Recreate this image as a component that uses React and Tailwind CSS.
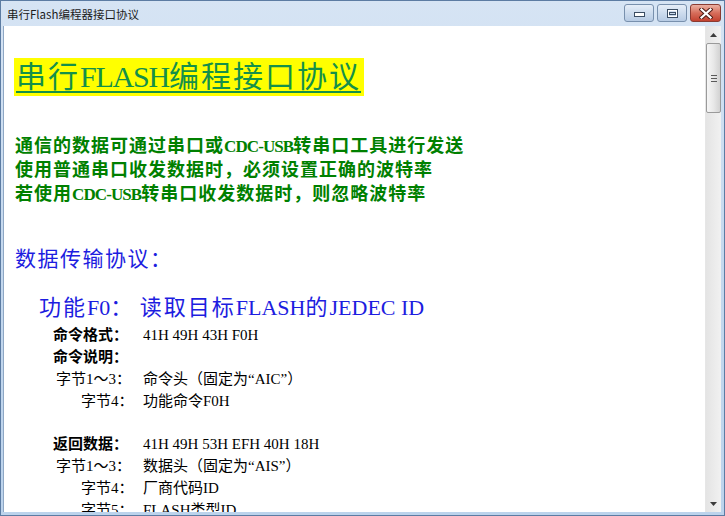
import React from "react";

function L({ children, className = "", tr = "tracking-normal" }) {
  return <span className={tr + " leading-none " + className}>{children}</span>;
}

function Row({ label, value, bold, indent }) {
  return (
    <div className="flex h-[21.875px]">
      <div className={"w-[90px] shrink-0 whitespace-nowrap " + indent + (bold ? " font-bold" : "")}>{label}</div>
      <div className="whitespace-nowrap">{value}</div>
    </div>
  );
}

export default function App() {
  return (
    <div className="w-[725px] h-[516px] flex flex-col border border-[#5c7ca3] bg-gradient-to-b from-[#d6e4f4] via-[#c4d8ee] to-[#bcd3ec] overflow-hidden">
      {/* title bar */}
      <div className="h-[25px] shrink-0 flex items-start justify-between pl-[6px] pr-[3px] pt-[3px]">
        <div className="mt-[2px] text-[11.5px] leading-[16px] text-[#1b1b1b] font-['Noto_Sans_CJK_SC',sans-serif]">
          串行Flash编程器接口协议
        </div>
        <div className="flex gap-[3px]">
          <div className="w-[30px] h-[18px] rounded-[3px] border border-[#7890ad] bg-gradient-to-b from-[#e6eef8] via-[#cddcee] to-[#b7cbe4] flex items-center justify-center">
            <svg width="11" height="5" viewBox="0 0 11 5" className="mt-[3px]">
              <rect x="0.5" y="0.5" width="10" height="4" fill="#ffffff" stroke="#3b4d63" />
            </svg>
          </div>
          <div className="w-[30px] h-[18px] rounded-[3px] border border-[#7890ad] bg-gradient-to-b from-[#e6eef8] via-[#cddcee] to-[#b7cbe4] flex items-center justify-center">
            <svg width="11" height="9" viewBox="0 0 11 9">
              <rect x="0.5" y="0.5" width="10" height="8" fill="none" stroke="#3b4d63" />
              <rect x="1.5" y="1.5" width="8" height="6" fill="none" stroke="#ffffff" />
              <rect x="2.5" y="3.5" width="6" height="2" fill="none" stroke="#3b4d63" />
            </svg>
          </div>
          <div className="w-[31px] h-[18px] rounded-[3px] border border-[#8a3b32] bg-gradient-to-b from-[#eab0a2] via-[#d66d5b] to-[#c3412f] flex items-center justify-center">
            <svg width="14" height="11" viewBox="0 0 14 11">
              <path d="M2.5 1.5 L11.5 9.5 M11.5 1.5 L2.5 9.5" stroke="#4e1c15" strokeWidth="4.2" strokeLinecap="square" />
              <path d="M2.5 1.5 L11.5 9.5 M11.5 1.5 L2.5 9.5" stroke="#ffffff" strokeWidth="2.2" strokeLinecap="square" />
            </svg>
          </div>
        </div>
      </div>

      {/* client area */}
      <div className="flex-1 flex ml-[2px] mr-[3px] mb-[3px] border-l border-[#8ea7c4] bg-white overflow-hidden">
        <div className="flex-1 overflow-hidden pl-[11px] font-['Liberation_Serif','Noto_Sans_CJK_SC',serif]">
          <div className="flex mt-[32px] -ml-[1px]">
            <span className="bg-[#ffff00] text-[#14904a] text-[30px] leading-[38px] tracking-[2px] underline decoration-2 underline-offset-[4px] pl-[2px] pr-[3px] whitespace-nowrap">
              串行<L className="text-[30px]" tr="tracking-[-1.2px]">FLASH</L>编程接口协议
            </span>
          </div>

          <div className="mt-[38px] text-[#008000] font-bold text-[18px] leading-[24px] tracking-[1px] whitespace-nowrap">
            <div>通信的数据可通过串口或<L className="text-[17px]" tr="tracking-[-0.9px]">CDC-USB</L>转串口工具进行发送</div>
            <div>使用普通串口收发数据时，必须设置正确的波特率</div>
            <div>若使用<L className="text-[17px]" tr="tracking-[-0.9px]">CDC-USB</L>转串口收发数据时，则忽略波特率</div>
          </div>

          <div className="mt-[38px] text-[#1d1de0] text-[21px] leading-[30px] tracking-[1.5px] whitespace-nowrap">
            数据传输协议：
          </div>

          <div className="mt-[19px] ml-[24px] text-[#1d1de0] text-[22px] leading-[30px] tracking-[2px] whitespace-nowrap">
            功能<L>F0</L>：<L> </L>读取目标<L>FLASH</L>的<L>JEDEC ID</L>
          </div>

          <div className="mt-[2px] ml-[38px] text-[15px] leading-[21.875px] text-black">
            <Row label="命令格式：" bold indent="pl-[0px]" value="41H 49H 43H F0H" />
            <Row label="命令说明：" bold indent="pl-[0px]" value="" />
            <Row label="字节1～3：" indent="pl-[3px]" value="命令头（固定为“AIC”）" />
            <Row label="字节4：" indent="pl-[28px]" value="功能命令F0H" />
            <Row label="" indent="pl-[0px]" value="" />
            <Row label="返回数据：" bold indent="pl-[0px]" value="41H 49H 53H EFH 40H 18H" />
            <Row label="字节1～3：" indent="pl-[3px]" value="数据头（固定为“AIS”）" />
            <Row label="字节4：" indent="pl-[28px]" value="厂商代码ID" />
            <Row label="字节5：" indent="pl-[28px]" value="FLASH类型ID" />
          </div>
        </div>

        {/* scrollbar */}
        <div className="w-[16px] shrink-0 flex flex-col bg-gradient-to-r from-[#e4e4e4] to-[#f1f1f1] border-l border-[#e6e6e6]">
          <div className="h-[17px] shrink-0 flex items-center justify-center">
            <svg width="7" height="4" viewBox="0 0 7 4">
              <path d="M0 4 L3.5 0 L7 4 Z" fill="#3c3c3c" />
            </svg>
          </div>
          <div className="h-[70px] shrink-0 rounded-[2px] border border-[#9a9a9a] bg-gradient-to-r from-[#f6f6f6] via-[#e8e8e8] to-[#d2d2d2] flex flex-col items-center justify-center gap-[2px]">
            <div className="w-[6px] h-[1px] bg-[#5a5a5a]" />
            <div className="w-[6px] h-[1px] bg-[#5a5a5a]" />
            <div className="w-[6px] h-[1px] bg-[#5a5a5a]" />
          </div>
          <div className="flex-1" />
          <div className="h-[17px] shrink-0 flex items-center justify-center">
            <svg width="7" height="4" viewBox="0 0 7 4">
              <path d="M0 0 L7 0 L3.5 4 Z" fill="#3c3c3c" />
            </svg>
          </div>
        </div>
      </div>
    </div>
  );
}
